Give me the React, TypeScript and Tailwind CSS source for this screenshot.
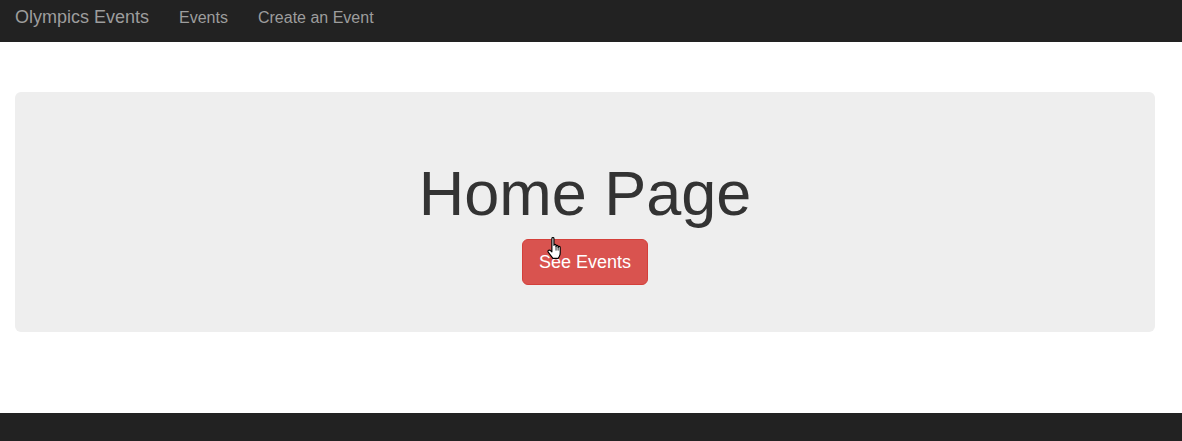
import React from 'react';

const HandCursor: React.FC = () => (
  <svg width="18" height="23" viewBox="0 0 17 22" className="absolute left-[24px] top-[-2px] pointer-events-none">
    <path
      d="M5.5 1.5 Q5.5 0.5 6.5 0.5 Q7.5 0.5 7.5 1.5 V8 Q7.5 7 8.5 7 Q9.5 7 9.5 8 V9 Q9.5 8 10.5 8 Q11.5 8 11.5 9 V10 Q11.5 9 12.5 9 Q13.5 9 13.5 10 V15 Q13.5 18 11.5 20.5 H6.5 L2 14.5 Q1.3 13.3 2.5 12.7 Q3.5 12.2 4.5 13.2 L5.5 14.2 Z"
      fill="#fff"
      stroke="#000"
      strokeWidth="1.1"
      strokeLinejoin="round"
    />
    <path d="M9.5 9 V13 M11.5 10 V13" stroke="#000" strokeWidth="0.8" />
  </svg>
);

const App: React.FC = () => {
  return (
    <div className="min-h-[441px] bg-white flex flex-col font-['Liberation_Sans',Arial,sans-serif] text-[#333]">
      {/* navbar */}
      <nav className="h-[42px] bg-[#222] flex items-baseline pt-[7px] px-[15px]">
        <a className="text-[18px] leading-[20px] text-[#9d9d9d] pr-[15px]">Olympics Events</a>
        <a className="text-[16px] leading-[20px] text-[#9d9d9d] px-[15px]">Events</a>
        <a className="text-[16px] leading-[20px] text-[#9d9d9d] px-[15px]">Create an Event</a>
      </nav>

      {/* jumbotron */}
      <div className="w-[1140px] ml-[15px] mt-[50px]">
        <div className="h-[240px] bg-[#eee] rounded-[6px] flex flex-col items-center pt-[67px]">
          <h1 className="text-[63px] leading-[69px] text-[#333]">Home Page</h1>
          <div className="relative mt-[11px]">
            <button className="h-[46px] px-[16px] text-[18px] leading-[24px] text-white bg-[#d9534f] border border-[#d43f3a] rounded-[6px]">
              See Events
            </button>
            <HandCursor />
          </div>
        </div>
      </div>

      <div className="h-[81px]" />

      {/* footer */}
      <footer className="h-[50px] bg-[#222]" />
    </div>
  );
};

export default App;
